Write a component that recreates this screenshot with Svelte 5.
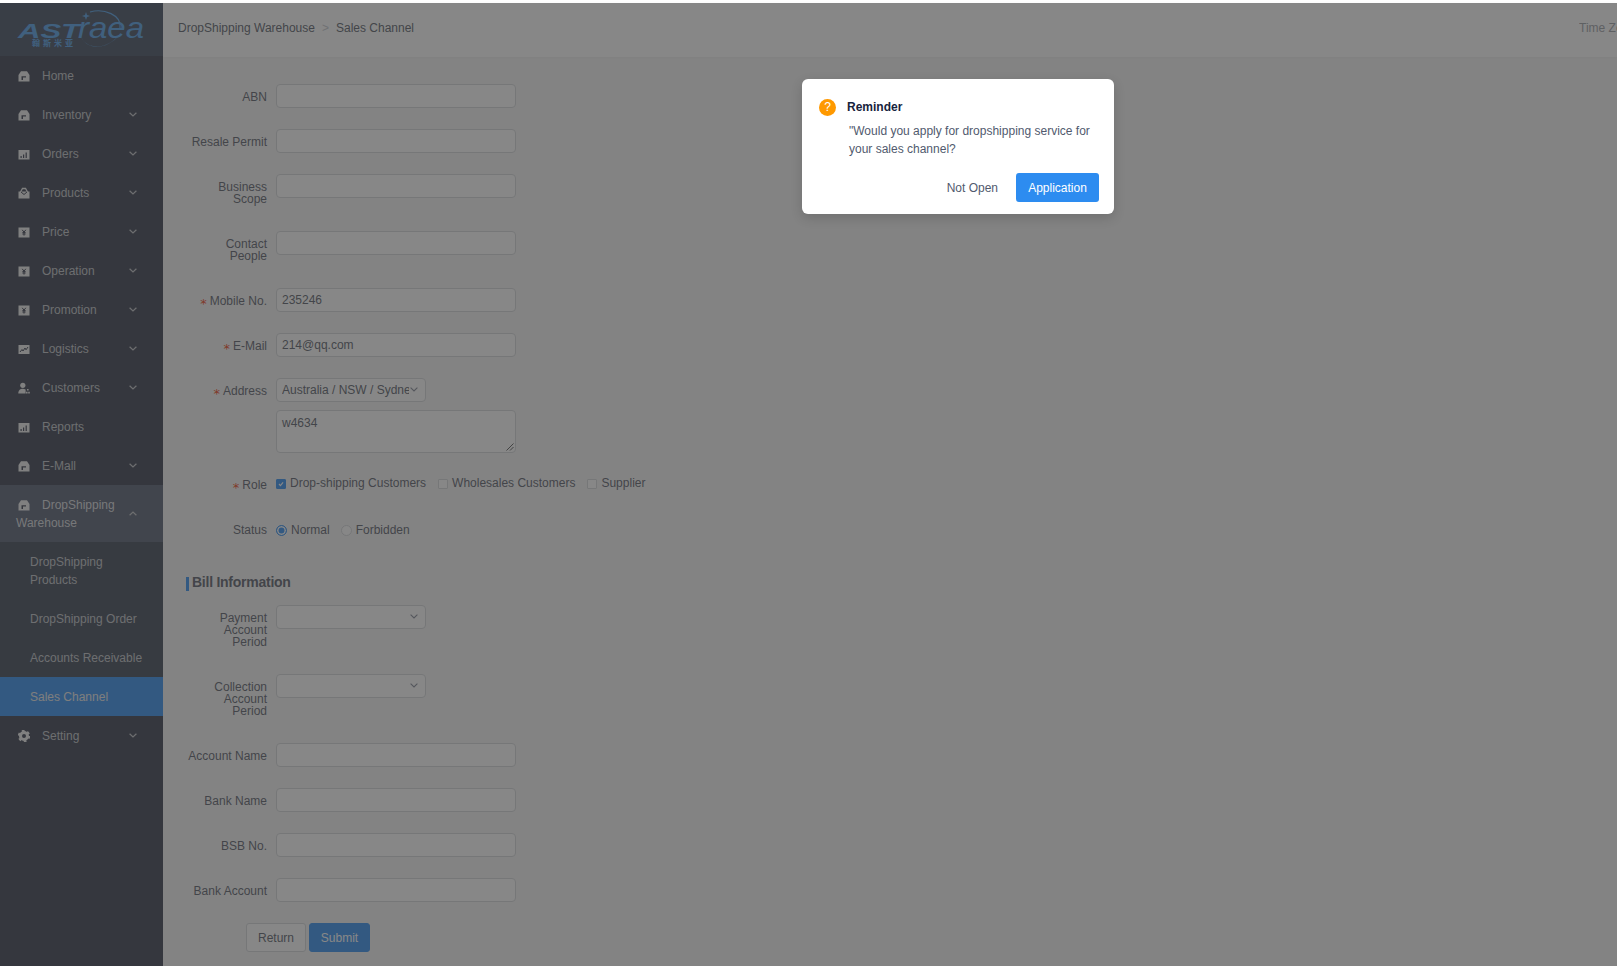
<script>
  const menu = [
    { label: 'Home', icon: 'home' },
    { label: 'Inventory', icon: 'home', arrow: true },
    { label: 'Orders', icon: 'chart', arrow: true },
    { label: 'Products', icon: 'bag', arrow: true },
    { label: 'Price', icon: 'yen', arrow: true },
    { label: 'Operation', icon: 'yen', arrow: true },
    { label: 'Promotion', icon: 'yen', arrow: true },
    { label: 'Logistics', icon: 'line', arrow: true },
    { label: 'Customers', icon: 'user', arrow: true },
    { label: 'Reports', icon: 'chart' },
    { label: 'E-Mall', icon: 'home', arrow: true }
  ];
  const subs = ['DropShipping Products', 'DropShipping Order', 'Accounts Receivable'];
  const topRows = [
    { label: 'ABN' },
    { label: 'Resale Permit' },
    { label: 'Business Scope' },
    { label: 'Contact People' },
    { label: 'Mobile No.', req: true, value: '235246' },
    { label: 'E-Mail', req: true, value: '214@qq.com' }
  ];
  const bankRows = ['Account Name', 'Bank Name', 'BSB No.', 'Bank Account'];
</script>

{#snippet icon(name)}
  <svg class="ico" viewBox="0 0 12 12" aria-hidden="true">
    {#if name === 'home'}
      <path class="f" d="M0.5 5 3 1.200H9L11.500 5V11.500H0.5Z" />
      <path class="d" d="M3.500 10V6.200H8V7.600H5V10Z" />
    {:else if name === 'chart'}
      <rect class="f" x="0.5" y="2" width="11" height="9.500" />
      <path class="d" d="M2.500 8h1.200v2H2.500zM5 6.500h1.200V10H5zM7.600 4.500h1.200V10H7.600z" />
    {:else if name === 'bag'}
      <path class="f" d="M0.5 4.500h11v7h-11z" />
      <path class="s" d="M2.500 5 4.500 1.500h3L9.500 5" />
      <path class="ds" d="M3 5 6 7.500 9 5" />
    {:else if name === 'yen'}
      <rect class="f" x="0.5" y="1.500" width="11" height="10" />
      <path class="ds" d="M4.200 3.800 6 6.200 7.800 3.800M6 6.200V9.600M4.400 6.600h3.200M4.400 8h3.200" />
    {:else if name === 'line'}
      <rect class="f" x="0.5" y="2" width="11" height="9" />
      <path class="ds" d="M2 9 4 6.500 5 8 7 5 8 6.800 10 4" />
    {:else if name === 'user'}
      <circle class="f" cx="4.800" cy="3.300" r="2.600" />
      <path class="f" d="M0.300 11.500C0.300 8 2.500 6.700 4.800 6.700c1 0 2 .3 2.800 .9v3.900Z" />
      <path class="f" d="M9 7h1.600v1.600H9zM8 9.800h1.600v1.700H8zM10.200 9.800h1.600v1.700h-1.600z" />
    {/if}
  </svg>
{/snippet}

{#snippet chevron(up)}
  <svg class={up ? 'chev up' : 'chev'} viewBox="0 0 8 5" aria-hidden="true">
    <path d="M0.600 0.700 4 4 7.400 0.700" />
  </svg>
{/snippet}

{#snippet selectArrow()}
  <svg class="sel-chev" viewBox="0 0 8 5" aria-hidden="true">
    <path d="M0.600 0.700 4 4 7.400 0.700" />
  </svg>
{/snippet}

<div class="page">
  <aside class="side">
    <div class="logo">
      <svg viewBox="0 0 163 53" width="163" height="53" aria-label="Astraea logo">
        <path class="sw" d="M80 31C84 45 98 46 108 41 113 38.500 116 36 118 33 112 40 102 45 93 43 86 42 82 37 80 31Z" />
        <path class="swl" d="M90 9C104 5 122 12 120 25" />
        <path class="sw" d="M86 9l1 3 3 1-3 1-1 3-1-3-3-1 3-1Z" />
        <text class="lg" x="18" y="35" textLength="62" lengthAdjust="spacingAndGlyphs">AST</text>
        <text class="lg2" x="78" y="35" textLength="66" lengthAdjust="spacingAndGlyphs">raea</text>
        <text class="cn" x="32" y="43" textLength="41">翰斯米亚</text>
      </svg>
    </div>
    <nav>
      {#each menu as m}
        <div class="item">
          {@render icon(m.icon)}<span>{m.label}</span>
          {#if m.arrow}{@render chevron(false)}{/if}
        </div>
      {/each}
      <div class="item open">
        {@render icon('home')}<span>DropShipping Warehouse</span>
        {@render chevron(true)}
      </div>
      {#each subs as s}
        <div class="sub">{s}</div>
      {/each}
      <div class="sub active">Sales Channel</div>
      <div class="item">
        <svg class="ico gear" viewBox="0 0 12 12" aria-hidden="true">
          <circle class="gr" cx="6" cy="6" r="3.500" />
          <circle class="gt" cx="6" cy="6" r="5.200" />
        </svg><span>Setting</span>
        {@render chevron(false)}
      </div>
    </nav>
  </aside>

  <main class="main">
    <header class="head">
      <div class="crumb">
        <span>DropShipping Warehouse</span><span class="sep">&gt;</span><span>Sales Channel</span>
      </div>
      <div class="tz">Time Zone</div>
    </header>

    <section class="content">
      {#each topRows as r}
        <div class="row">
          <div class="lab">{#if r.req}<i class="req">*</i>{/if}{r.label}</div>
          <div class="ctl"><div class="input">{r.value ?? ''}</div></div>
        </div>
      {/each}

      <div class="row addr">
        <div class="lab"><i class="req">*</i>Address</div>
        <div class="ctl col">
          <div class="select"><span class="clip">Australia / NSW / Sydney</span>{@render selectArrow()}</div>
          <div class="area">
            w4634
            <svg class="grip" viewBox="0 0 9 9" aria-hidden="true"><path d="M8.500 1.500 1.500 8.500M8.500 5 5 8.500" /></svg>
          </div>
        </div>
      </div>

      <div class="row">
        <div class="lab"><i class="req">*</i>Role</div>
        <div class="ctl opts">
          <span class="check on"><svg viewBox="0 0 10 10" aria-hidden="true"><path d="M2.500 5 4.300 7 7.600 3" /></svg></span><span class="opt first">Drop-shipping Customers</span>
          <span class="check"></span><span class="opt">Wholesales Customers</span>
          <span class="check"></span><span class="opt">Supplier</span>
        </div>
      </div>

      <div class="row">
        <div class="lab">Status</div>
        <div class="ctl opts radios">
          <span class="radio on"></span><span class="opt">Normal</span>
          <span class="radio"></span><span class="opt">Forbidden</span>
        </div>
      </div>

      <h3 class="bill">Bill Information</h3>

      <div class="row">
        <div class="lab">Payment Account Period</div>
        <div class="ctl"><div class="select">{@render selectArrow()}</div></div>
      </div>
      <div class="row">
        <div class="lab">Collection Account Period</div>
        <div class="ctl"><div class="select">{@render selectArrow()}</div></div>
      </div>
      {#each bankRows as label}
        <div class="row">
          <div class="lab">{label}</div>
          <div class="ctl"><div class="input"></div></div>
        </div>
      {/each}

      <div class="actions">
        <button class="btn">Return</button>
        <button class="btn primary">Submit</button>
      </div>
    </section>
  </main>

  <div class="mask"></div>

  <div class="modal">
    <div class="m-title">
      <span class="q">?</span>
      <strong>Reminder</strong>
    </div>
    <p class="m-body">"Would you apply for dropshipping service for your sales channel?</p>
    <div class="m-foot">
      <button class="m-text">Not Open</button>
      <button class="m-primary">Application</button>
    </div>
  </div>
</div>

<style>
  :global(body) { margin: 0; background: #fff; }
  .page {
    position: relative;
    display: flex;
    box-sizing: border-box;
    height: 966px;
    width: 1617px;
    padding-top: 3px;
    overflow: hidden;
    font: 12px "Liberation Sans", Arial, sans-serif;
    color: #555a66;
  }

  /* sidebar */
  .side { width: 163px; flex: none; background: #333849; color: #bfc1c5; }
  .logo { height: 53px; background: #3e4a5e; }
  .logo svg { display: block; }
  .lg, .lg2 { font: italic bold 21px "Liberation Sans", sans-serif; fill: #4f9fe8; }
  .lg2 { font-size: 30px; font-weight: 400; }
  .cn { font: bold 8px "Noto Sans CJK SC", sans-serif; fill: #4f9fe8; }
  .sw { fill: #4f9fe8; }
  .swl { fill: none; stroke: #4f9fe8; stroke-width: 1.200; }

  .item {
    position: relative;
    padding: 10.500px 40px 10.500px 16px;
    line-height: 18px;
  }
  .ico { width: 12px; height: 12px; margin: 0 12px 0 2px; vertical-align: -2px; }
  .f { fill: #eee; }
  .d { fill: #333849; }
  .s { fill: none; stroke: #eee; stroke-width: 1.300; }
  .ds { fill: none; stroke: #333849; stroke-width: 1; }
  .gr { fill: none; stroke: #eee; stroke-width: 3; }
  .gt { fill: none; stroke: #eee; stroke-width: 2; stroke-dasharray: 2.720 2.720; }
  .chev {
    position: absolute;
    right: 26px;
    top: 50%;
    width: 8px;
    height: 5px;
    margin-top: -3px;
    fill: none;
    stroke: #bfc1c5;
    stroke-width: 1.200;
  }
  .chev.up { transform: rotate(180deg); }
  .open { background: #505a6e; color: #d8dade; }
  .sub {
    padding: 10.500px 20px 10.500px 30px;
    line-height: 18px;
    background: #394152;
  }
  .sub.active { background: #2d8cf0; color: #e8e8e8; }

  /* main */
  .main { flex: 1; min-width: 0; display: flex; flex-direction: column; }
  .head {
    position: relative;
    height: 54px;
    flex: none;
    display: flex;
    align-items: center;
    padding-left: 15px;
    padding-bottom: 4px;
    box-sizing: border-box;
    background: #fff;
    box-shadow: 0 1px 4px rgba(0, 0, 0, 0.04);
  }
  .crumb { flex: 1; }
  .sep { color: #c5c8ce; margin: 0 7px; }
  .tz { flex: none; width: 38px; overflow: hidden; white-space: nowrap; color: #9a9da4; }
  .content {
    flex: 1;
    padding: 27px 0 0 24px;
    background: #f6f6f6;
  }
  .row { display: flex; margin-bottom: 21px; }
  .row.addr { margin-bottom: 19px; }
  .lab {
    width: 80px;
    flex: none;
    box-sizing: content-box;
    padding: 7px 9px 5px 0;
    line-height: 12px;
    text-align: right;
  }
  .req {
    color: #ed4014;
    font: 13px "DejaVu Sans", sans-serif;
    line-height: 0;
    vertical-align: -3px;
    margin-right: 3px;
  }
  .ctl.col { display: flex; flex-direction: column; gap: 8px; }
  .input, .select, .area {
    box-sizing: border-box;
    width: 240px;
    height: 24px;
    padding: 0 5px;
    line-height: 22px;
    border: 1px solid #d4d6da;
    border-radius: 4px;
    background: #fff;
  }
  .select { position: relative; width: 150px; }
  .clip { display: block; width: 127px; overflow: hidden; white-space: nowrap; }
  .sel-chev {
    position: absolute;
    right: 7px;
    top: 8px;
    width: 8px;
    height: 5px;
    fill: none;
    stroke: #808695;
    stroke-width: 1.100;
  }
  .area { position: relative; height: 43px; line-height: 16px; padding-top: 4px; }
  .grip {
    position: absolute;
    right: 1px;
    bottom: 1px;
    width: 9px;
    height: 9px;
    fill: none;
    stroke: #555;
    stroke-width: 1;
  }
  .opts { display: flex; align-items: center; height: 22px; }
  .check {
    box-sizing: border-box;
    width: 10px;
    height: 10px;
    margin-right: 4px;
    margin-top: 1px;
    border: 1px solid #d4d6da;
    border-radius: 1px;
    background: #fff;
  }
  .check.on { background: #2d8cf0; border-color: #2d8cf0; }
  .check svg { display: block; width: 8px; height: 8px; fill: none; stroke: #fff; stroke-width: 1.500; }
  .opt { margin-right: 12px; }
  .radios { height: 26px; }
  .radio {
    box-sizing: border-box;
    width: 11px;
    height: 11px;
    margin-right: 4px;
    border: 1px solid #d4d6da;
    border-radius: 50%;
    background: #fff;
  }
  .radio.on { border-color: #2d8cf0; box-shadow: inset 0 0 0 1.500px #fff; background: #2d8cf0; }
  .radios .opt { margin-right: 11px; }
  .bill {
    margin: 28px 0 12px -1px;
    height: 22px;
    line-height: 22px;
    padding-left: 6px;
    font-size: 14px;
    letter-spacing: -0.25px;
    font-weight: bold;
    background: linear-gradient(#2d8cf0, #2d8cf0) no-repeat 0 6px / 3px 14px;
  }
  .actions { display: flex; gap: 3px; margin-left: 59px; margin-top: 20px; }
  .btn {
    box-sizing: border-box;
    height: 29px;
    width: 60px;
    border: 1px solid #d4d6da;
    border-radius: 3px;
    background: #fff;
    color: inherit;
    font: inherit;
    padding: 0;
  }
  .btn.primary { width: 61px; background: #2d8cf0; border-color: #2d8cf0; color: #fff; }

  /* overlay */
  .mask { position: absolute; inset: 3px 0 0 0; background: rgba(55, 55, 55, 0.6); }
  .modal {
    position: absolute;
    left: 802px;
    top: 79px;
    box-sizing: border-box;
    width: 312px;
    height: 135px;
    padding: 17px 15px 12px 17px;
    background: #fff;
    border-radius: 6px;
    box-shadow: 0 4px 12px rgba(0, 0, 0, 0.15);
    color: #515a6e;
  }
  .m-title { display: flex; align-items: center; height: 22px; color: #17233d; }
  .m-title strong { font-weight: 700; margin-left: 11px; }
  .q {
    width: 17px;
    height: 17px;
    flex: none;
    border-radius: 50%;
    background: #ff9900;
    color: #fff;
    text-align: center;
    line-height: 17px;
  }
  .m-body { margin: 4px 0 0 30px; line-height: 18px; width: 250px; }
  .m-foot { display: flex; justify-content: flex-end; align-items: center; margin-top: 15px; }
  .m-text { border: 0; background: none; color: #515a6e; font: inherit; padding: 0; margin-right: 18px; }
  .m-primary {
    box-sizing: border-box;
    width: 83px;
    height: 29px;
    border: 0;
    border-radius: 3px;
    background: #2d8cf0;
    color: #fff;
    font: inherit;
    padding: 0;
  }
</style>
